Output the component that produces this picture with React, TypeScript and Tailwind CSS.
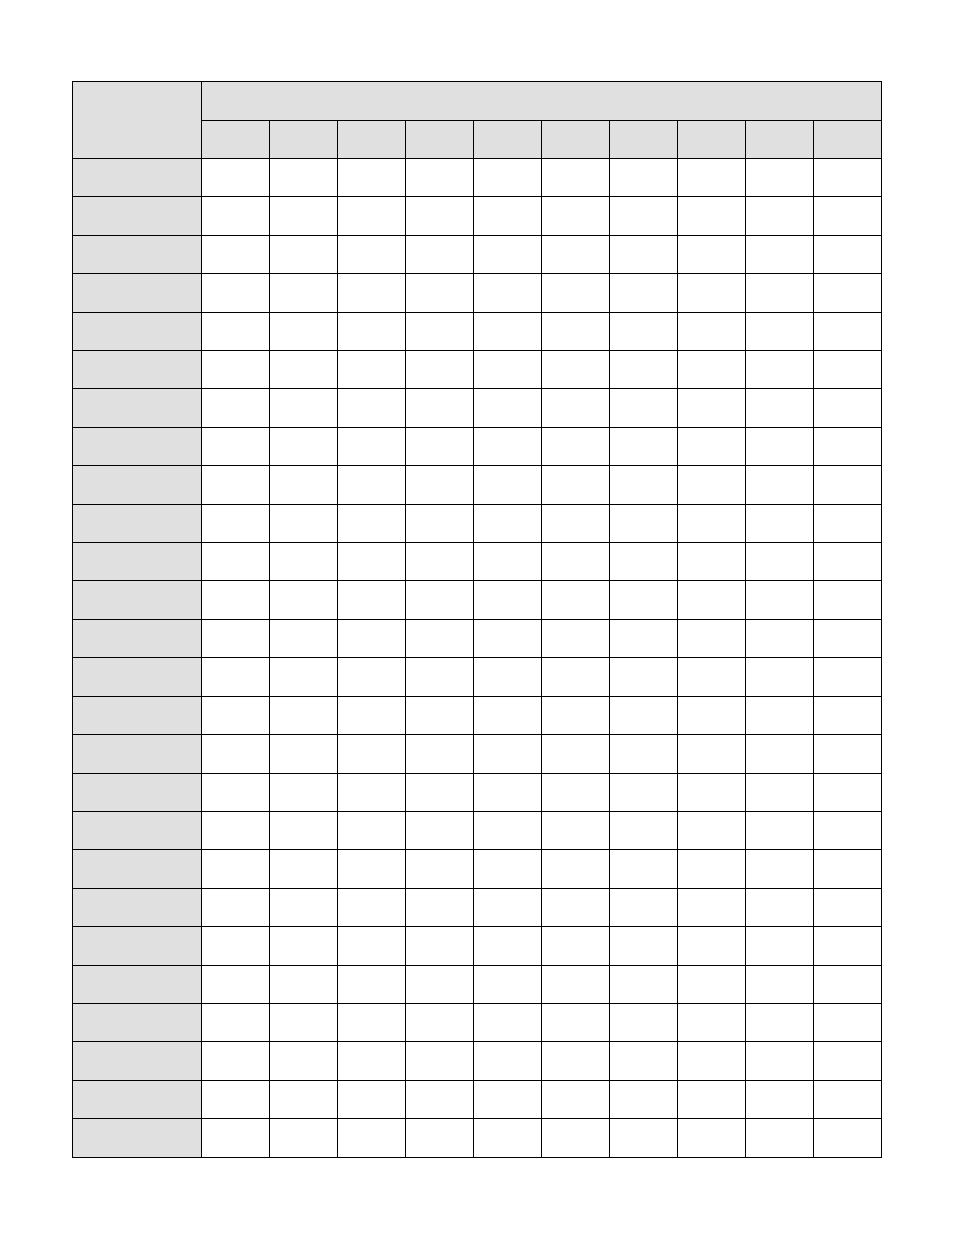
const dataCols = Array.from({ length: 10 }, (_, i) => i);
const bodyRows = Array.from({ length: 26 }, (_, i) => i);

export default function App() {
  return (
    <div className="min-h-[1248px] w-[954px] bg-white pl-[72px] pt-[81px]">
      <table className="w-[809px] table-fixed border-collapse border border-black">
        <colgroup>
          <col className="w-[129px]" />
          {dataCols.map((c) => (
            <col key={c} className="w-[68px]" />
          ))}
        </colgroup>
        <thead>
          <tr className="h-[39px]">
            <th rowSpan={2} className="border border-black bg-[#e0e0e0]" />
            <th colSpan={10} className="border border-black bg-[#e0e0e0]" />
          </tr>
          <tr className="h-[38px]">
            {dataCols.map((c) => (
              <th key={c} className="border border-black bg-[#e0e0e0]" />
            ))}
          </tr>
        </thead>
        <tbody>
          {bodyRows.map((r) => (
            <tr key={r} className="h-[38.42px]">
              <th className="border border-black bg-[#e0e0e0]" />
              {dataCols.map((c) => (
                <td key={c} className="border border-black bg-white" />
              ))}
            </tr>
          ))}
        </tbody>
      </table>
    </div>
  );
}
